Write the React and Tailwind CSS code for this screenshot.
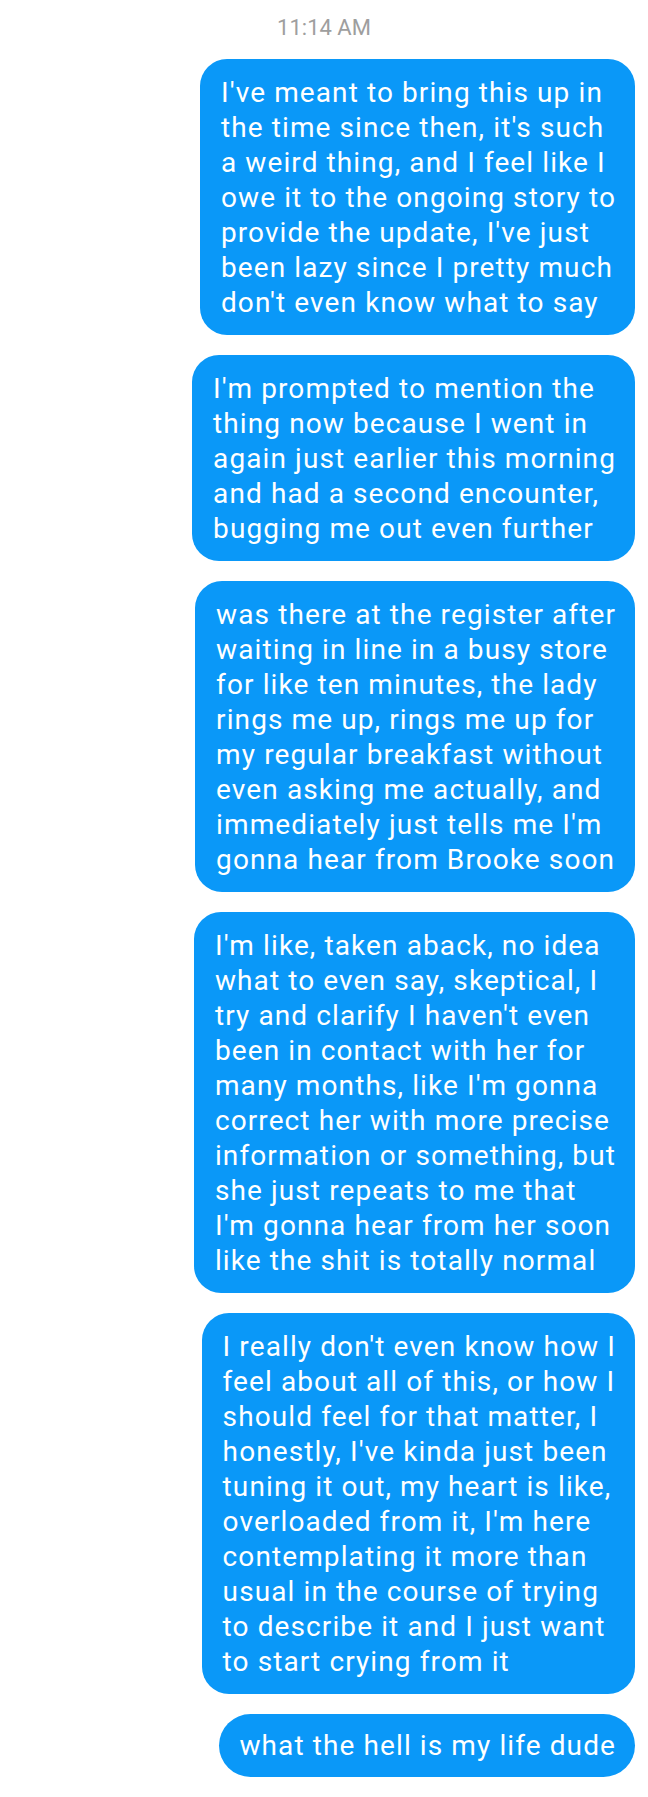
import React from "react";

const messages = [
  [
    "I've meant to bring this up in",
    "the time since then, it's such",
    "a weird thing, and I feel like I",
    "owe it to the ongoing story to",
    "provide the update, I've just",
    "been lazy since I pretty much",
    "don't even know what to say",
  ],
  [
    "I'm prompted to mention the",
    "thing now because I went in",
    "again just earlier this morning",
    "and had a second encounter,",
    "bugging me out even further",
  ],
  [
    "was there at the register after",
    "waiting in line in a busy store",
    "for like ten minutes, the lady",
    "rings me up, rings me up for",
    "my regular breakfast without",
    "even asking me actually, and",
    "immediately just tells me I'm",
    "gonna hear from Brooke soon",
  ],
  [
    "I'm like, taken aback, no idea",
    "what to even say, skeptical, I",
    "try and clarify I haven't even",
    "been in contact with her for",
    "many months, like I'm gonna",
    "correct her with more precise",
    "information or something, but",
    "she just repeats to me that",
    "I'm gonna hear from her soon",
    "like the shit is totally normal",
  ],
  [
    "I really don't even know how I",
    "feel about all of this, or how I",
    "should feel for that matter, I",
    "honestly, I've kinda just been",
    "tuning it out, my heart is like,",
    "overloaded from it, I'm here",
    "contemplating it more than",
    "usual in the course of trying",
    "to describe it and I just want",
    "to start crying from it",
  ],
];

const Bubble = ({ lines }) => (
  <div className="bg-[#0a98f8] text-white rounded-[27px] pl-[21px] pr-[19px] pt-4 pb-[15px] text-[28px] leading-[35px] tracking-[1.1px] whitespace-nowrap">
    {lines.map((l, i) => (
      <div key={i}>{l}</div>
    ))}
  </div>
);

export default function App() {
  return (
    <div className="w-[648px] min-h-[1797px] bg-white font-['Roboto',sans-serif]">
      <p className="text-center text-[#9e9e9e] text-[22px] leading-[28px] pt-[14px] pb-[17px]">
        11:14 AM
      </p>
      <div className="flex flex-col items-end gap-5 pr-[13px]">
        {messages.map((m, i) => (
          <Bubble key={i} lines={m} />
        ))}
        <div className="bg-[#0a98f8] text-white rounded-full pl-[20px] pr-[19px] py-[14px] text-[28px] leading-[35px] tracking-[1.1px] whitespace-nowrap">
          what the hell is my life dude
        </div>
      </div>
    </div>
  );
}
